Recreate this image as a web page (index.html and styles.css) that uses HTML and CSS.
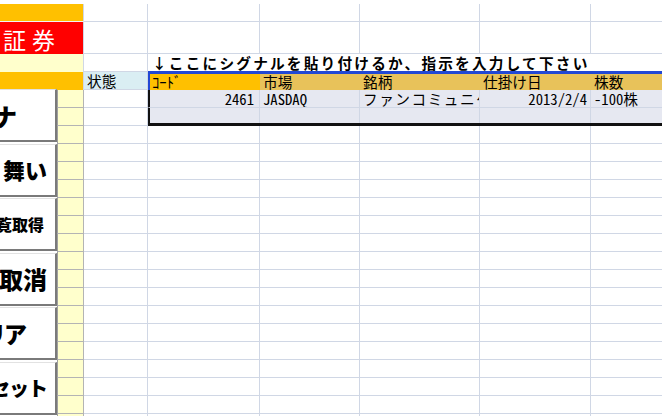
FILE: index.html
```html
<!DOCTYPE html>
<html lang="ja">
<head>
  <meta charset="UTF-8" />
  <title>シグナル発注</title>
  <link rel="stylesheet" href="styles.css">
</head>
<body>

  <div class="sheet">
    <!-- left bands (merged A:B) -->
    <div class="band band-top"></div>
    <div class="band band-title">証券</div>
    <div class="band band-note"></div>
    <div class="band band-head"></div>

    <!-- macro buttons -->
    <div class="buttons">
      <div class="btn btn-1">ナ</div>
      <div class="btn btn-2">舞い</div>
      <div class="btn btn-3">一覧取得</div>
      <div class="btn btn-4">注文取消</div>
      <div class="btn btn-5">クリア</div>
      <div class="btn btn-6">リセット</div>
    </div>

    <div class="note">↓ここにシグナルを貼り付けるか、指示を入力して下さい</div>

    <!-- signal paste area -->
    <div class="signals">
      <div class="sig-head first">ｺｰﾄﾞ</div>
      <div class="sig-head">市場</div>
      <div class="sig-head">銘柄</div>
      <div class="sig-head">仕掛け日</div>
      <div class="sig-head">株数</div>

      <div class="sig-cell first num">2461</div>
      <div class="sig-cell">JASDAQ</div>
      <div class="sig-cell name">ファンコミュニケーションズ</div>
      <div class="sig-cell num">2013/2/4</div>
      <div class="sig-cell">-100株</div>

      <div class="sig-cell first last"></div>
      <div class="sig-cell last"></div>
      <div class="sig-cell last"></div>
      <div class="sig-cell last"></div>
      <div class="sig-cell last"></div>
    </div>

    <!-- row 1 -->
    <div></div><div></div><div></div><div></div><div></div><div></div>
    <!-- row 2 -->
    <div></div><div></div><div></div><div></div><div></div><div></div>
    <!-- row 3 -->
    <div></div>
    <!-- row 4 -->
    <div class="status">状態</div>
    <!-- rows 5-6 -->
    <div class="y"></div><div></div>
    <div class="y"></div><div></div>
    <!-- rows 7-23 -->
    <div class="y"></div><div></div><div></div><div></div><div></div><div></div><div></div>
    <div class="y"></div><div></div><div></div><div></div><div></div><div></div><div></div>
    <div class="y"></div><div></div><div></div><div></div><div></div><div></div><div></div>
    <div class="y"></div><div></div><div></div><div></div><div></div><div></div><div></div>
    <div class="y"></div><div></div><div></div><div></div><div></div><div></div><div></div>
    <div class="y"></div><div></div><div></div><div></div><div></div><div></div><div></div>
    <div class="y"></div><div></div><div></div><div></div><div></div><div></div><div></div>
    <div class="y"></div><div></div><div></div><div></div><div></div><div></div><div></div>
    <div class="y"></div><div></div><div></div><div></div><div></div><div></div><div></div>
    <div class="y"></div><div></div><div></div><div></div><div></div><div></div><div></div>
    <div class="y"></div><div></div><div></div><div></div><div></div><div></div><div></div>
    <div class="y"></div><div></div><div></div><div></div><div></div><div></div><div></div>
    <div class="y"></div><div></div><div></div><div></div><div></div><div></div><div></div>
    <div class="y"></div><div></div><div></div><div></div><div></div><div></div><div></div>
    <div class="y"></div><div></div><div></div><div></div><div></div><div></div><div></div>
    <div class="y"></div><div></div><div></div><div></div><div></div><div></div><div></div>
    <div class="y"></div><div></div><div></div><div></div><div></div><div></div><div></div>
  </div>

</body>
</html>
```

FILE: styles.css
```css
body {
  margin: 0;
  padding-top: 4px;
  background-color: #fff;
  overflow: hidden;
  font-family: "Noto Sans CJK JP", sans-serif;
}
.sheet {
  display: grid;
  grid-template-columns: 57px 27px 64px 112px 100px 120px 111px 120px;
  grid-template-rows: 18px 32px repeat(21, 18px);
  font-family: "Noto Sans Mono CJK JP", "Noto Sans CJK JP", sans-serif;
  font-size: 14.67px;
  color: #000;
}
.sheet > div {
  box-sizing: border-box;
  border-right: 1px solid #d0d7e5;
  border-bottom: 1px solid #d0d7e5;
  white-space: nowrap;
  overflow: hidden;
  line-height: 17px;
  padding: 0 3px;
}

/* left coloured bands */
.sheet > .band {
  grid-column: 1 / 3;
  border-bottom: none;
}
.band-top {
  grid-row: 1;
  background-color: #ffc000;
}
.sheet > .band-top {
  border-bottom: 1px solid #f4f4f4;
}
.band-title {
  grid-row: 2;
  background-color: #f00;
  color: #fff;
  font-family: "Noto Sans CJK JP", sans-serif;
  font-size: 23px;
  letter-spacing: 6px;
}
.sheet > .band-title {
  line-height: 30px;
  padding: 2px 0 0 3px;
}
.band-note {
  grid-row: 3;
  background-color: #ffffcc;
}
.band-head {
  grid-row: 4;
  background-color: #ffc000;
}

.status {
  background-color: #daeef3;
}
.sheet > .y {
  background-color: #ffffcc;
  border-left: 1px solid #a0a0a0;
  border-right-color: #b4b4b4;
  border-bottom-color: #b4b4b4;
}

/* buttons */
.sheet > .buttons {
  grid-column: 1;
  grid-row: 5 / -1;
  margin-top: -1px;
  border: none;
  padding: 0;
  display: flex;
  flex-direction: column;
  gap: 1.5px;
}
.btn {
  flex: 0 0 53px;
  box-sizing: border-box;
  display: flex;
  align-items: center;
  justify-content: flex-end;
  background-color: #fff;
  border-top: 1px solid #e2e2e2;
  border-right: 2px solid #7a7a7a;
  border-bottom: 2px solid #7a7a7a;
  font-family: "Noto Sans CJK JP", sans-serif;
  font-weight: 900;
  font-size: 24px;
  color: #000;
}
.btn-1 { padding-right: 38px; }
.btn-2 { padding-right: 8px; font-size: 22px; }
.btn-3 { padding-right: 11px; font-size: 16px; }
.btn-4 { padding-right: 8px; }
.btn-5 { padding-right: 30px; font-size: 23px; letter-spacing: -2px; }
.btn-6 { padding-right: 8px; font-size: 20px; letter-spacing: -1px; }

/* instruction line */
.sheet > .note {
  grid-column: 4 / 9;
  grid-row: 3;
  border-right: none;
  padding-left: 4px;
  font-family: "Noto Sans CJK JP", sans-serif;
  font-weight: 700;
  letter-spacing: 2.2px;
}

/* signal paste area */
.sheet > .signals {
  grid-column: 4 / 9;
  grid-row: 4 / 7;
  margin: -1px 0 0 -1px;
  padding: 0;
  display: grid;
  grid-template-columns: 113px 100px 120px 111px 1fr;
  grid-template-rows: 16px 18px 1fr;
  border-top: 3px solid #2248d4;
  border-bottom: 3px solid #111;
  border-right: none;
  background-color: #e6e8f1;
}
.sig-head {
  background-color: #e8c25a;
  padding: 0 3px;
  line-height: 16px;
}
.sig-head.first {
  background-color: #ffc000;
  border-left: 3px solid #2248d4;
  padding-left: 2px;
}
.sig-cell {
  box-sizing: border-box;
  border-right: 1px solid #d0d7e5;
  border-bottom: 1px solid #d0d7e5;
  padding: 0 3px;
  overflow: hidden;
}
.sig-cell.first {
  border-left: 3px solid #111;
  padding-right: 5px;
}
.sig-cell.last {
  border-bottom: none;
}
.sig-cell.num {
  text-align: right;
}
.sig-cell.name {
  letter-spacing: 1.5px;
}
```
